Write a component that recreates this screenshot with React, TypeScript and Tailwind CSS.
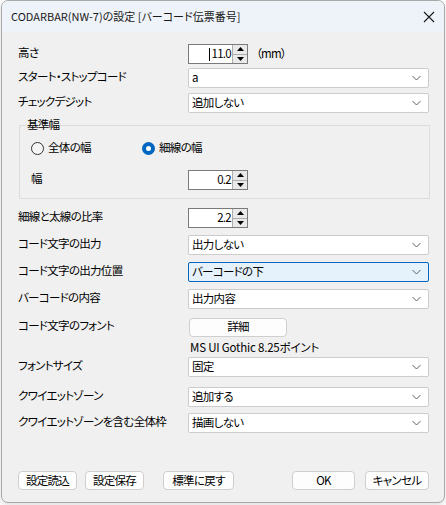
import React from 'react';

const font = "[font-family:'Noto_Sans_CJK_JP',sans-serif] [font-feature-settings:'palt']";
const txt = "text-[11.5px] tracking-[-0.7px] leading-none text-black";

const Chevron = () => (
    <svg width="9" height="5" viewBox="0 0 9 5" className="absolute right-[7px] top-1/2 -translate-y-1/2">
        <path d="M0.5 0.5 L4.5 4.5 L8.5 0.5" fill="none" stroke="#606060" strokeWidth="1" />
    </svg>
);

const Select = ({ value, focused = false }: { value: string; focused?: boolean }) => (
    <div
        className={`relative h-[20px] w-[241px] flex items-center pl-[3px] border rounded-[2px] ${focused
            ? 'bg-[#e5f1fb] border-[#0067c0]'
            : 'bg-white border-[#cccccc]'
            }`}
    >
        <span className={txt}>{value}</span>
        <Chevron />
    </div>
);

const Spinner = ({ value, caret = false }: { value: string; caret?: boolean }) => (
    <div className="h-[20px] w-[60px] flex bg-white border border-[#7a7a7a]">
        <div className="flex-1 flex items-center justify-end pr-[1px]">
            {caret && <span className="w-px h-[13px] bg-black mr-[1px]" />}
            <span className={txt}>{value}</span>
        </div>
        <div className="w-[15px] flex flex-col border-l border-[#adadad] bg-[#e9e9e9]">
            {/* up / down buttons */}
            <div className="flex-1 flex items-center justify-center border-b border-[#adadad]">
                <svg width="7" height="4" viewBox="0 0 7 4"><path d="M3.5 0 L7 4 L0 4 Z" fill="#000" /></svg>
            </div>
            <div className="flex-1 flex items-center justify-center">
                <svg width="7" height="4" viewBox="0 0 7 4"><path d="M0 0 L7 0 L3.5 4 Z" fill="#000" /></svg>
            </div>
        </div>
    </div>
);

const Button = ({ label, width }: { label: string; width: string }) => (
    <div className={`${width} h-[19px] flex items-center justify-center bg-[#fdfdfd] border border-[#cfcfcf] rounded-[4px] ${txt}`}>
        {label}
    </div>
);

const Row = ({ label, children, mt }: { label: string; children: React.ReactNode; mt: string }) => (
    <div className={`flex items-center h-[20px] ${mt}`}>
        <div className={`w-[170px] -mt-[2px] ${txt}`}>{label}</div>
        {children}
    </div>
);

const Radio = ({ checked }: { checked: boolean }) =>
    checked ? (
        <span className="w-[13px] h-[13px] rounded-full bg-[#0067c0] flex items-center justify-center">
            <span className="w-[5px] h-[5px] rounded-full bg-white" />
        </span>
    ) : (
        <span className="w-[13px] h-[13px] rounded-full border border-[#333333] bg-[#f5f5f5]" />
    );

export default function App() {
    return (
        <div className={`w-[446px] h-[505px] bg-white ${font}`}>
            <div className="ml-[1px] w-[444px] h-[503px] flex flex-col border border-[#a9a9a9] rounded-[7px] overflow-hidden bg-[#f0f0f0] shadow-[0_2px_6px_rgba(0,0,0,0.15)]">
                {/* Title bar */}
                <div className="h-[31px] shrink-0 flex items-center justify-between pl-[9px] pr-[8px] bg-[#eef3f9]">
                    <span className="text-[11px] leading-none text-[#1a1a1a]">CODARBAR(NW-7)の設定 [バーコード伝票番号]</span>
                    <svg width="12" height="12" viewBox="0 0 12 12" className="mr-[1px]">
                        <path d="M1 1 L11 11 M11 1 L1 11" stroke="#1a1a1a" strokeWidth="1.1" />
                    </svg>
                </div>

                {/* Body */}
                <div className="flex flex-col pl-[16px]">
                    <Row label="高さ" mt="mt-[12px]">
                        <Spinner value="11.0" caret />
                        <span className={`ml-[8px] ${txt}`}>（mm）</span>
                    </Row>
                    <Row label="スタート・ストップコード" mt="mt-[4px]">
                        <Select value="a" />
                    </Row>
                    <Row label="チェックデジット" mt="mt-[5px]">
                        <Select value="追加しない" />
                    </Row>

                    {/* 基準幅 group */}
                    <div className="relative mt-[4px] pt-[8px] pl-[1px]">
                        <span className={`absolute left-[8px] top-[2px] px-[1px] bg-[#f0f0f0] ${txt}`}>基準幅</span>
                        <div className="w-[411px] h-[74px] border border-[#dcdcdc] pl-[11px]">
                            <div className="flex items-center h-[14px] mt-[15px]">
                                <div className="flex items-center w-[111px]">
                                    <Radio checked={false} />
                                    <span className={`ml-[4px] ${txt}`}>全体の幅</span>
                                </div>
                                <div className="flex items-center">
                                    <Radio checked />
                                    <span className={`ml-[4px] ${txt}`}>細線の幅</span>
                                </div>
                            </div>
                            <div className="flex items-center h-[20px] mt-[15px]">
                                <div className={`w-[157px] -mt-[2px] ${txt}`}>幅</div>
                                <Spinner value="0.2" />
                            </div>
                        </div>
                    </div>

                    <Row label="細線と太線の比率" mt="mt-[9px]">
                        <Spinner value="2.2" />
                    </Row>
                    <Row label="コード文字の出力" mt="mt-[7px]">
                        <Select value="出力しない" />
                    </Row>
                    <Row label="コード文字の出力位置" mt="mt-[7px]">
                        <Select value="バーコードの下" focused />
                    </Row>
                    <Row label="バーコードの内容" mt="mt-[7px]">
                        <Select value="出力内容" />
                    </Row>
                    <Row label="コード文字のフォント" mt="mt-[8px]">
                        <div className="ml-[1px]">
                            <Button label="詳細" width="w-[98px]" />
                        </div>
                    </Row>
                    <div className="flex items-center h-[14px] mt-[4px] pl-[172px]">
                        <span className="text-[11.5px] tracking-[-0.2px] leading-none text-black">MS UI Gothic 8.25ポイント</span>
                    </div>
                    <Row label="フォントサイズ" mt="mt-[2px]">
                        <Select value="固定" />
                    </Row>
                    <Row label="クワイエットゾーン" mt="mt-[10px]">
                        <Select value="追加する" />
                    </Row>
                    <Row label="クワイエットゾーンを含む全体枠" mt="mt-[6px]">
                        <Select value="描画しない" />
                    </Row>

                    {/* Footer buttons */}
                    <div className="flex items-center mt-[38px] pr-[15px]">
                        <Button label="設定読込" width="w-[59px]" />
                        <div className="ml-[8px]"><Button label="設定保存" width="w-[59px]" /></div>
                        <div className="ml-[19px]"><Button label="標準に戻す" width="w-[71px]" /></div>
                        <div className="ml-auto"><Button label="OK" width="w-[63px]" /></div>
                        <div className="ml-[10px]"><Button label="キャンセル" width="w-[64px]" /></div>
                    </div>
                </div>
            </div>
        </div>
    );
}
